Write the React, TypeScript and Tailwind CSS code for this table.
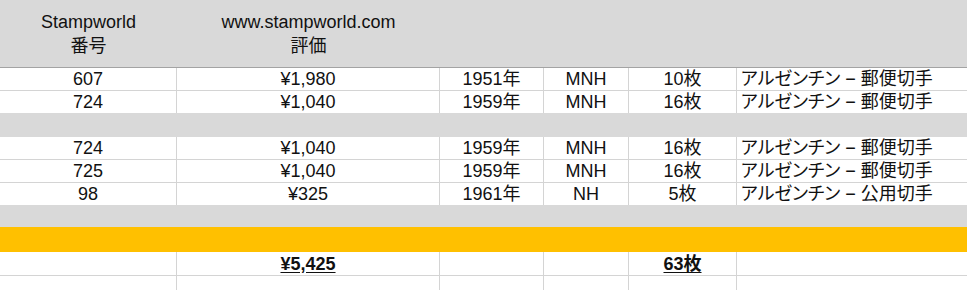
const rowsA = [
  { no: "607", price: "¥1,980", year: "1951年", cond: "MNH", qty: "10枚", desc: "アルゼンチン − 郵便切手" },
  { no: "724", price: "¥1,040", year: "1959年", cond: "MNH", qty: "16枚", desc: "アルゼンチン − 郵便切手" },
]

const rowsB = [
  { no: "724", price: "¥1,040", year: "1959年", cond: "MNH", qty: "16枚", desc: "アルゼンチン − 郵便切手" },
  { no: "725", price: "¥1,040", year: "1959年", cond: "MNH", qty: "16枚", desc: "アルゼンチン − 郵便切手" },
  { no: "98", price: "¥325", year: "1961年", cond: "NH", qty: "5枚", desc: "アルゼンチン − 公用切手" },
]

const cols = "grid grid-cols-[177px_263px_104px_85px_108px_1fr]"

type Row = { no: string; price: string; year: string; cond: string; qty: string; desc: string }

function DataRow({ r, last }: { r: Row; last?: boolean }) {
  const h = last ? "h-[22px]" : "h-[23px] border-b"
  const cell = `${h} border-r border-[#d4d4d4] flex items-center justify-center`
  return (
    <div className={cols}>
      <div className={cell}>{r.no}</div>
      <div className={cell}>{r.price}</div>
      <div className={cell}>{r.year}</div>
      <div className={cell}>{r.cond}</div>
      <div className={cell}>{r.qty}</div>
      <div className={`${h} border-[#d4d4d4] flex items-center pl-1 [font-feature-settings:'palt']`}>{r.desc}</div>
    </div>
  )
}

export default function App() {
  const cell = "border-r border-[#d4d4d4] flex items-center justify-center"
  return (
    <div className="w-[967px] h-[290px] overflow-hidden bg-white text-[#111] text-[18px] leading-[22px] font-['Liberation_Sans','Noto_Sans_CJK_JP',sans-serif]">
      <div className={`${cols} h-[68px] bg-[#d9d9d9] border-b border-[#a3a3a3] leading-6`}>
        <div className="flex flex-col items-center justify-center">
          <span>Stampworld</span>
          <span>番号</span>
        </div>
        <div className="flex flex-col items-center justify-center">
          <span>www.stampworld.com</span>
          <span>評価</span>
        </div>
      </div>

      {rowsA.map((r, i) => (
        <DataRow key={i} r={r} last={i === rowsA.length - 1} />
      ))}
      <div className="h-6 bg-[#d9d9d9]" />
      {rowsB.map((r, i) => (
        <DataRow key={i} r={r} last={i === rowsB.length - 1} />
      ))}
      <div className="h-[22px] bg-[#d9d9d9]" />
      <div className="h-[25px] bg-[#ffc000]" />

      <div className={`${cols} h-6 border-b border-[#d4d4d4]`}>
        <div className={cell} />
        <div className={`${cell} font-bold underline underline-offset-2`}>¥5,425</div>
        <div className={cell} />
        <div className={cell} />
        <div className={`${cell} font-bold underline underline-offset-2`}>63枚</div>
        <div />
      </div>
      <div className={`${cols} h-6`}>
        <div className="border-r border-[#d4d4d4]" />
        <div className="border-r border-[#d4d4d4]" />
        <div className="border-r border-[#d4d4d4]" />
        <div className="border-r border-[#d4d4d4]" />
        <div className="border-r border-[#d4d4d4]" />
        <div />
      </div>
    </div>
  )
}
